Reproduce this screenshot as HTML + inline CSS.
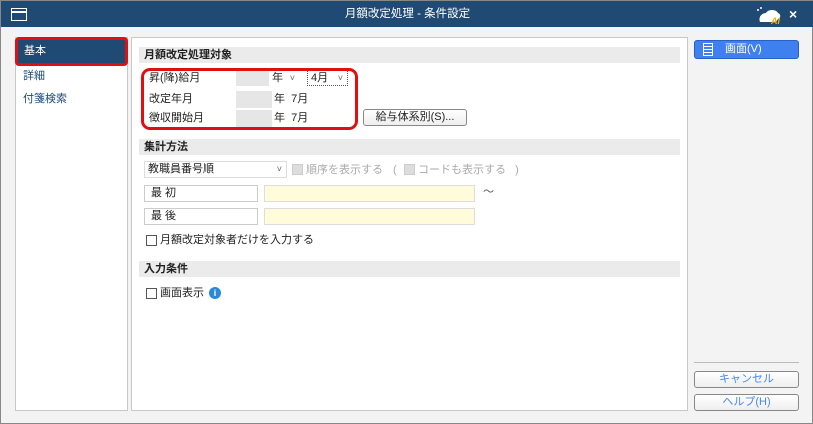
<!DOCTYPE html>
<html><head><meta charset="utf-8"><style>
*{box-sizing:border-box;margin:0;padding:0}
body{width:813px;height:424px;background:#f3f3f3;font-family:"Liberation Sans","Noto Sans CJK JP",sans-serif;font-size:11px;line-height:16px;color:#222;position:relative;overflow:hidden;border:1px solid #888}
.a{position:absolute}
.title{left:0;top:0;width:813px;height:26px;background:#1f4a73;color:#fff;text-align:center;line-height:26px;font-size:11.5px}
.panel{background:#fff;border:1px solid #c8c8c8}
.hdr{background:#ebebeb;font-weight:bold;height:16px;line-height:16px;padding-left:5px;font-size:11px}
.gray{background:#e6e6e6}
.dd{background:#fff;border:1px solid #ddd;line-height:15px;padding-left:3px}
.dd:after{content:"˅";position:absolute;right:4px;top:0;font-size:9px;color:#666}
.inp{background:#fff;border:1px solid #ccc;line-height:15px;padding-left:6px}
.yel{background:#fffbdb;border:1px solid #ddd}
.cb{width:11px;height:11px;border:1px solid #555;background:#fff}
.btn{border:1px solid #888;border-radius:3px;background:linear-gradient(#fff,#eee);text-align:center;line-height:15px}
</style></head><body>
<div class="a title">月額改定処理 - 条件設定</div>
<div class="a" style="left:10px;top:7px;width:16px;height:13px;border:1.5px solid #fff"><div style="border-top:2px solid #fff;margin-top:2px"></div></div>
<svg class="a" style="left:753px;top:4px" width="30" height="20"><path d="M6 17 C4 12 8 8 12 8 C14 4 22 4 24 8 C27 9 27 13 24 14 L22 17Z" fill="#fff"/><circle cx="4" cy="5" r="1" fill="#fff"/><circle cx="7" cy="3" r="1" fill="#fff"/><text x="17" y="19" font-size="9" font-style="italic" font-weight="bold" fill="#f0b400">AI</text></svg>
<div class="a" style="left:788px;top:5px;color:#fff;font-size:14px;font-weight:bold">×</div>

<div class="a panel" style="left:14px;top:36px;width:113px;height:374px"></div>
<div class="a" style="left:14px;top:36px;width:113px;height:29px;background:#1f4a73;border:3px solid #e01010;border-radius:4px;color:#fff;line-height:23px;padding-left:6px">基本</div>
<div class="a" style="left:22px;top:67px;color:#1f4a73">詳細</div>
<div class="a" style="left:22px;top:90px;color:#1f4a73">付箋検索</div>

<div class="a panel" style="left:130px;top:36px;width:557px;height:374px"></div>
<div class="a hdr" style="left:138px;top:46px;width:541px">月額改定処理対象</div>
<div class="a" style="left:148px;top:69px">昇(降)給月</div>
<div class="a" style="left:148px;top:90px">改定年月</div>
<div class="a" style="left:148px;top:109px">徴収開始月</div>
<div class="a gray" style="left:235px;top:69px;width:34px;height:16px"></div>
<div class="a dd" style="left:268px;top:70px;width:30px;height:16px;border:none">年</div>
<div class="a dd" style="left:306px;top:69px;width:41px;height:16px;border:1px dotted #555">4月</div>
<div class="a gray" style="left:235px;top:90px;width:36px;height:17px"></div>
<div class="a" style="left:273px;top:90px">年&nbsp;&nbsp;7月</div>
<div class="a gray" style="left:235px;top:109px;width:36px;height:17px"></div>
<div class="a" style="left:273px;top:109px">年&nbsp;&nbsp;7月</div>
<div class="a" style="left:140px;top:67px;width:217px;height:62px;border:3px solid #e01010;border-radius:9px"></div>
<div class="a btn" style="left:362px;top:108px;width:104px;height:17px">給与体系別(S)...</div>

<div class="a hdr" style="left:138px;top:138px;width:541px">集計方法</div>
<div class="a dd" style="left:143px;top:160px;width:143px;height:17px">教職員番号順</div>
<div class="a cb" style="left:291px;top:163px;border-color:#ccc;background:#ddd"></div>
<div class="a" style="left:305px;top:161px;color:#aaa">順序を表示する</div>
<div class="a" style="left:392px;top:161px;color:#aaa">(</div>
<div class="a cb" style="left:403px;top:163px;border-color:#ccc;background:#ddd"></div>
<div class="a" style="left:417px;top:161px;color:#aaa">コードも表示する&nbsp;&nbsp;&nbsp;)</div>
<div class="a inp" style="left:143px;top:184px;width:114px;height:17px">最 初</div>
<div class="a yel" style="left:263px;top:184px;width:211px;height:17px"></div>
<div class="a" style="left:482px;top:183px;color:#555">〜</div>
<div class="a inp" style="left:143px;top:207px;width:114px;height:17px">最 後</div>
<div class="a yel" style="left:263px;top:207px;width:211px;height:17px"></div>
<div class="a cb" style="left:145px;top:234px"></div>
<div class="a" style="left:159px;top:231px">月額改定対象者だけを入力する</div>
<div class="a hdr" style="left:138px;top:260px;width:541px">入力条件</div>
<div class="a cb" style="left:145px;top:287px"></div>
<div class="a" style="left:159px;top:284px">画面表示</div>
<div class="a" style="left:208px;top:286px;width:12px;height:12px;border-radius:50%;background:#2a8ad8;color:#fff;font-size:9px;font-weight:bold;text-align:center;line-height:12px">i</div>

<div class="a" style="left:693px;top:39px;width:105px;height:19px;background:#3f80f0;border:1px solid #2860c8;border-radius:3px;color:#fff;line-height:17px;padding-left:30px">画面(V)</div>
<div class="a" style="left:702px;top:42px;width:10px;height:13px;border:1px solid #fff;background:repeating-linear-gradient(#3f80f0 0 2px,#fff 2px 3px)"></div>
<div class="a" style="left:693px;top:361px;width:105px;border-top:1px solid #bbb"></div>
<div class="a btn" style="left:693px;top:370px;width:105px;height:17px;color:#4a88e8">キャンセル</div>
<div class="a btn" style="left:693px;top:393px;width:105px;height:17px;color:#4a88e8">ヘルプ(H)</div>
</body></html>
